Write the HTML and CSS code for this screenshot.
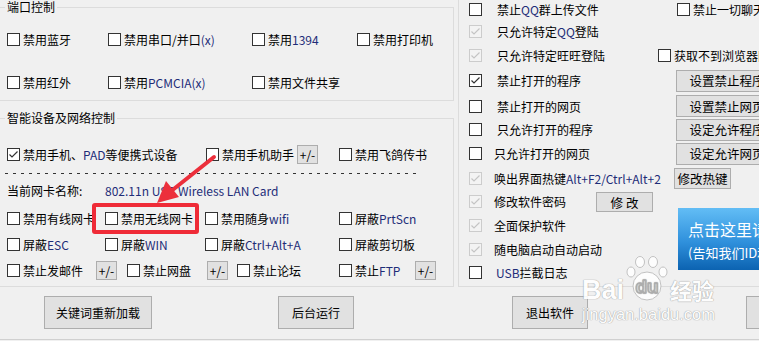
FILE: index.html
```html
<!DOCTYPE html>
<html lang="zh-CN">
<head>
    <meta charset="UTF-8">
    <meta name="viewport" content="width=device-width, initial-scale=1.0">
    <title>设备控制设置</title>
    <link rel="stylesheet" href="styles.css">
</head>
<body>

<div id="main">
    <div class="col-left">
        <!-- 端口控制 -->
        <fieldset class="group group-port">
            <legend>端口控制</legend>
            <div class="port-grid">
                <label class="chk"><span class="box"></span>禁用蓝牙</label>
                <label class="chk"><span class="box"></span>禁用串口/并口<span class="en">(x)</span></label>
                <label class="chk"><span class="box"></span>禁用<span class="en">1394</span></label>
                <label class="chk"><span class="box"></span>禁用打印机</label>
                <label class="chk"><span class="box"></span>禁用红外</label>
                <label class="chk"><span class="box"></span>禁用<span class="en">PCMCIA(x)</span></label>
                <label class="chk"><span class="box"></span>禁用文件共享</label>
            </div>
        </fieldset>

        <!-- 智能设备及网络控制 -->
        <fieldset class="group group-dev">
            <legend>智能设备及网络控制</legend>
            <div class="row row-top">
                <label class="chk phone"><span class="box"><svg viewBox="0 0 11 11"><path d="M1.5 5.5l2.5 2.5 5.5-5.5"/></svg></span>禁用手机、<span class="en">PAD</span>等便携式设备</label>
                <div class="helper">
                    <label class="chk"><span class="box"></span>禁用手机助手</label>
                    <button class="pm">+/-</button>
                </div>
                <label class="chk"><span class="box"></span>禁用飞鸽传书</label>
            </div>
            <div class="dash"></div>
            <div class="row row-nic">
                <span class="nic-label">当前网卡名称:</span>
                <span class="en">802.11n USB Wireless LAN Card</span>
            </div>
            <div class="net-grid">
                <label class="chk"><span class="box"></span>禁用有线网卡</label>
                <label class="chk"><span class="box"></span>禁用无线网卡</label>
                <label class="chk"><span class="box"></span>禁用随身<span class="en">wifi</span></label>
                <label class="chk"><span class="box"></span>屏蔽<span class="en">PrtScn</span></label>
                <label class="chk"><span class="box"></span>屏蔽<span class="en">ESC</span></label>
                <label class="chk"><span class="box"></span>屏蔽<span class="en">WIN</span></label>
                <label class="chk"><span class="box"></span>屏蔽<span class="en">Ctrl+Alt+A</span></label>
                <label class="chk"><span class="box"></span>屏蔽剪切板</label>
            </div>
            <div class="row row-bottom">
                <label class="chk mail"><span class="box"></span>禁止发邮件</label>
                <button class="pm">+/-</button>
                <label class="chk disk"><span class="box"></span>禁止网盘</label>
                <button class="pm">+/-</button>
                <label class="chk forum"><span class="box"></span>禁止论坛</label>
                <label class="chk ftp"><span class="box"></span>禁止<span class="en">FTP</span></label>
                <button class="pm">+/-</button>
            </div>
        </fieldset>
    </div>

    <div class="col-right">
        <div class="group-r">
            <div class="r-grid">
                <span class="box"></span>
                <span class="rl">禁止<span class="en">QQ</span>群上传文件</span>
                <label class="chk rs chat"><span class="box"></span>禁止一切聊天工具</label>

                <span class="box off"><svg viewBox="0 0 11 11"><path d="M1.5 5.5l2.5 2.5 5.5-5.5"/></svg></span>
                <span class="rl">只允许特定<span class="en">QQ</span>登陆</span>

                <span class="box off"><svg viewBox="0 0 11 11"><path d="M1.5 5.5l2.5 2.5 5.5-5.5"/></svg></span>
                <span class="rl">只允许特定旺旺登陆</span>
                <label class="chk rs"><span class="box"></span>获取不到浏览器网址时断网</label>

                <span class="box"><svg viewBox="0 0 11 11"><path d="M1.5 5.5l2.5 2.5 5.5-5.5"/></svg></span>
                <span class="rl">禁止打开的程序</span>
                <button class="rbtn rs">设置禁止程序</button>

                <span class="box"></span>
                <span class="rl">禁止打开的网页</span>
                <button class="rbtn rs">设置禁止网页</button>

                <span class="box"></span>
                <span class="rl">只允许打开的程序</span>
                <button class="rbtn rs">设定允许程序</button>

                <span class="box"></span>
                <span class="rl sh">只允许打开的网页</span>
                <button class="rbtn rs">设定允许网页</button>

                <span class="box off"><svg viewBox="0 0 11 11"><path d="M1.5 5.5l2.5 2.5 5.5-5.5"/></svg></span>
                <span class="rl sh">唤出界面热键<span class="en">Alt+F2/Ctrl+Alt+2</span></span>
                <button class="hot rs">修改热键</button>

                <span class="box off"><svg viewBox="0 0 11 11"><path d="M1.5 5.5l2.5 2.5 5.5-5.5"/></svg></span>
                <div class="rl sh pwd"><span>修改软件密码</span><button class="edit">修 改</button></div>

                <span class="box off"><svg viewBox="0 0 11 11"><path d="M1.5 5.5l2.5 2.5 5.5-5.5"/></svg></span>
                <span class="rl sh">全面保护软件</span>
                <div class="banner rs">
                    <div class="b1">点击这里请联系客服</div>
                    <div class="b2">(告知我们ID和机器码)</div>
                </div>

                <span class="box off"><svg viewBox="0 0 11 11"><path d="M1.5 5.5l2.5 2.5 5.5-5.5"/></svg></span>
                <span class="rl sh">随电脑启动自动启动</span>

                <span class="box"></span>
                <span class="rl usb"><span class="en">USB</span>拦截日志</span>
            </div>
        </div>
    </div>
</div>

<div class="bottom">
    <div><button class="bbtn wide">关键词重新加载</button></div>
    <div><button class="bbtn">后台运行</button></div>
    <div><button class="bbtn">退出软件</button></div>
    <div><button class="bbtn">关于软件</button></div>
</div>

<!-- 标注：红框和箭头 -->
<div class="mark"></div>
<svg class="arrow" width="759" height="341" viewBox="0 0 759 341">
    <line x1="214" y1="157" x2="170" y2="192" stroke="#ec2f3b" stroke-width="4" stroke-linecap="round"/>
    <polygon points="157,203 179,197 166,181" fill="#ec2f3b"/>
</svg>

<!-- 水印 -->
<div class="wm">
    <div class="wm-top">
        <span class="wm-bai">Bai</span>
        <svg class="paw" width="46" height="46" viewBox="0 0 46 46">
            <ellipse cx="7" cy="17" rx="4" ry="5"/>
            <ellipse cx="16" cy="7" rx="4.5" ry="5.5"/>
            <ellipse cx="29" cy="7" rx="4.5" ry="5.5"/>
            <ellipse cx="39" cy="17" rx="4" ry="5"/>
            <circle cx="23" cy="31" r="14"/>
            <text x="23" y="38" text-anchor="middle">du</text>
        </svg>
        <span class="wm-jy">经验</span>
    </div>
    <div class="wm-url">jingyan.baidu.com</div>
</div>

</body>
</html>
```

FILE: styles.css
```css
* {
    box-sizing: border-box;
}
body {
    margin: 0;
    width: 759px;
    height: 341px;
    overflow: hidden;
    position: relative;
    background-color: #f0f0f0;
    font-family: "Noto Sans CJK SC", "Noto Sans", sans-serif;
    font-size: 12px;
    color: #000;
}
button {
    font-family: inherit;
    font-size: 12px;
    color: #000;
    background-color: #e1e1e1;
    border: 1px solid #adadad;
    padding: 0;
    border-radius: 0;
}
.en {
    color: #1e2d78;
}

#main {
    display: flex;
}
.col-left {
    width: 455px;
    flex-shrink: 0;
}
.col-right {
    width: 420px;
    flex-shrink: 0;
}

/* 分组框 */
.group {
    margin: 0 0 0 -1px;
    width: 455px;
    min-inline-size: 0;
    border: 1px solid #dcdcdc;
    padding: 0 0 0 7px;
}
.group legend {
    padding: 0 2px;
    margin-left: -2px;
    line-height: 14px;
}
.group-port {
    padding-top: 14px;
    padding-bottom: 7px;
}
.group-dev {
    margin-top: 10px;
    padding-top: 18px;
    padding-bottom: 3px;
}

/* 复选框 */
.chk {
    display: flex;
    align-items: center;
    white-space: nowrap;
}
.box {
    width: 13px;
    height: 13px;
    flex-shrink: 0;
    border: 1px solid #333;
    background-color: #fff;
    display: flex;
    align-items: center;
    justify-content: center;
}
.chk .box {
    margin-right: 3px;
}
.box svg {
    width: 11px;
    height: 11px;
    fill: none;
    stroke: #333;
    stroke-width: 1.2;
}
.box.off {
    border-color: #cccccc;
    background-color: #f3f3f3;
}
.box.off svg {
    stroke: #c4c4c4;
}

.port-grid {
    display: grid;
    grid-template-columns: 101px 144px 105px auto;
    grid-auto-rows: 22px;
    row-gap: 21px;
}

.row {
    display: flex;
    align-items: center;
}
.row-top {
    height: 22px;
}
.phone {
    width: 199px;
}
.helper {
    width: 133px;
    display: flex;
    align-items: center;
    gap: 3px;
}
.pm {
    width: 21px;
    height: 19px;
    line-height: 17px;
}
.dash {
    margin: 8px 0 0 -2px;
    width: 412px;
    height: 1px;
    background: repeating-linear-gradient(90deg, #333 0 3px, transparent 3px 8px);
}
.row-nic {
    margin-top: 7px;
    height: 18px;
}
.nic-label {
    width: 98px;
}
.net-grid {
    margin-top: 6px;
    display: grid;
    grid-template-columns: 98px 100px 134px auto;
    grid-auto-rows: 26px;
    align-items: center;
}
.row-bottom {
    height: 26px;
}
.mail {
    width: 89px;
}
.disk {
    width: 80px;
    margin-left: 10px;
}
.forum {
    width: 102px;
    margin-left: 9px;
}
.ftp {
    width: 76px;
}

/* 右侧 */
.group-r {
    margin: -3px 0 0 3px;
    width: 400px;
    border: 1px solid #dcdcdc;
    padding: 0 0 3px 10px;
}
.r-grid {
    display: grid;
    grid-template-columns: 28px 161px 1fr;
    grid-template-rows: 22px 23px 24px 27px 24px 23px 25px 24px 23px 24px 25px 21px;
    align-items: center;
}
.r-grid > .box {
    grid-column: 1;
}
.rl {
    grid-column: 2;
    white-space: nowrap;
}
.rl.sh {
    margin-left: -3px;
}
.rl.usb {
    margin-left: -1px;
}
.rs {
    grid-column: 3;
    justify-self: start;
}
.chat {
    margin-left: 19px;
}
.rbtn {
    width: 102px;
    height: 22px;
    margin-left: 18px;
    font-size: 12.5px;
}
.hot {
    width: 57px;
    height: 21px;
    margin-left: 16px;
    font-size: 12.5px;
}
.pwd {
    display: flex;
    align-items: center;
    justify-content: space-between;
    padding-right: 5px;
}
.edit {
    width: 57px;
    height: 20px;
    font-size: 12.5px;
}
.banner {
    grid-row: span 3;
    align-self: start;
    margin: -5px 0 0 20px;
    width: 130px;
    height: 62px;
    padding: 11px 0 0 10px;
    background: linear-gradient(#62bdf5, #2f90dc 55%, #0c63b1);
    color: #fff;
    white-space: nowrap;
    overflow: hidden;
}
.b1 {
    font-size: 16px;
    line-height: 20px;
}
.b2 {
    margin-top: 6px;
    font-size: 13px;
    line-height: 16px;
}

/* 底部按钮 */
.bottom {
    display: grid;
    grid-template-columns: repeat(4, 234px);
    padding: 9px 0 10px 44px;
    border-bottom: 1px solid #d0d0d0;
}
.bbtn {
    width: 76px;
    height: 33px;
}
.bbtn.wide {
    width: 108px;
}

/* 标注 */
.mark {
    position: absolute;
    left: 92px;
    top: 203px;
    width: 107px;
    height: 31px;
    border: 4px solid #ef2b37;
    border-radius: 3px;
}
.arrow {
    position: absolute;
    left: 0;
    top: 0;
}

/* 水印 */
.wm {
    position: absolute;
    left: 582px;
    top: 255px;
    opacity: 0.9;
    color: #fff;
    text-shadow: 0 0 1px #9a9a9a, 0 0 1px #9a9a9a;
}
.wm-top {
    display: flex;
    align-items: flex-end;
    height: 46px;
}
.wm-bai {
    font-family: "Liberation Sans", sans-serif;
    font-weight: bold;
    font-size: 27px;
    line-height: 22px;
}
.paw {
    fill: #fff;
    stroke: #bdbdbd;
    stroke-width: 1;
}
.paw text {
    font-family: "Liberation Sans", sans-serif;
    font-weight: bold;
    font-size: 19px;
    fill: #e4e4e4;
    stroke: #a8a8a8;
    stroke-width: 0.8;
}
.wm-jy {
    font-size: 22px;
    line-height: 24px;
    font-weight: bold;
}
.wm-url {
    margin-top: 4px;
    font-family: "Liberation Sans", sans-serif;
    font-size: 16.5px;
    line-height: 18px;
}
```
